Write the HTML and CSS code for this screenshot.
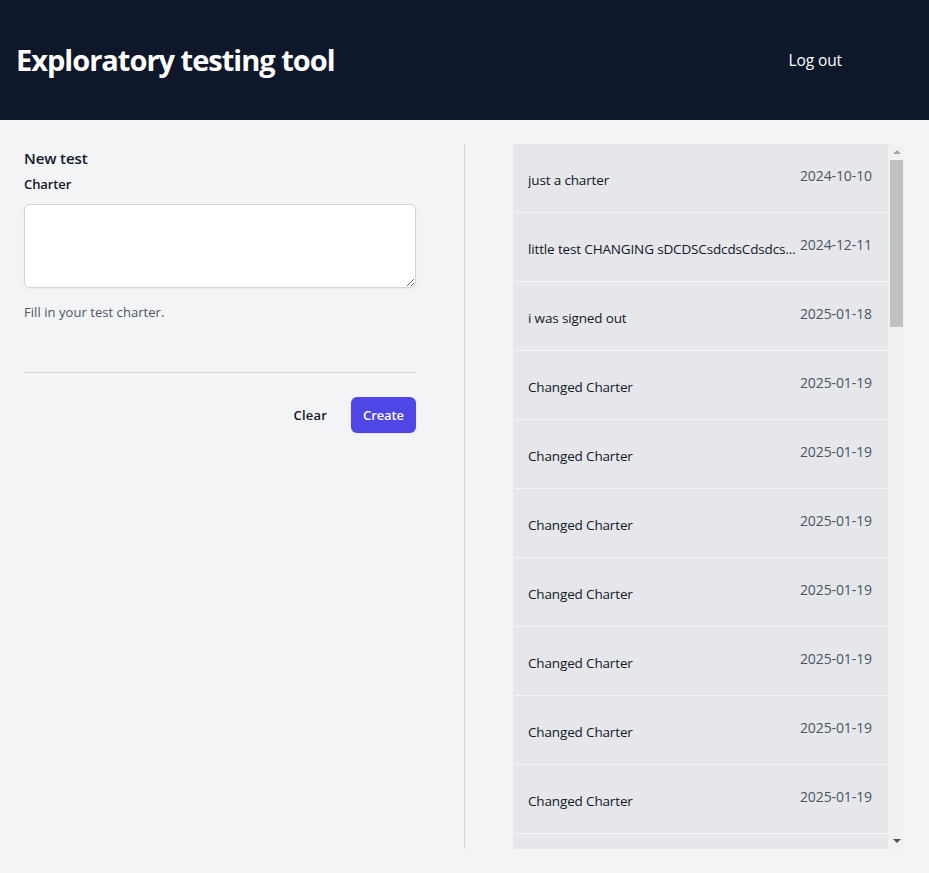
FILE: index.html
```html
<!DOCTYPE html>
<html lang="en">
<head>
<meta charset="utf-8">
<title>Exploratory testing tool</title>
<link rel="stylesheet" href="styles.css">
</head>
<body>
<header class="topbar">
  <h1 class="title">Exploratory testing tool</h1>
  <a class="logout" href="#">Log out</a>
</header>
<main class="main">
  <section class="col col-left">
    <form class="form">
      <div class="form-section">
        <h2 class="form-heading">New test</h2>
        <label class="label" for="charter">Charter</label>
        <textarea id="charter" class="textarea" rows="3"></textarea>
        <p class="hint">Fill in your test charter.</p>
      </div>
      <div class="actions">
        <button type="button" class="btn-clear">Clear</button>
        <button type="button" class="btn-create">Create</button>
      </div>
    </form>
  </section>
  <section class="col col-right">
    <div class="list-wrap">
      <ul class="list">
        <li class="item"><span class="item-title">just a charter</span><span class="item-date">2024-10-10</span></li>
        <li class="item"><span class="item-title">little test CHANGING sDCDSCsdcdsCdsdcsdcSDCsdcsdc</span><span class="item-date">2024-12-11</span></li>
        <li class="item"><span class="item-title">i was signed out</span><span class="item-date">2025-01-18</span></li>
        <li class="item"><span class="item-title">Changed Charter</span><span class="item-date">2025-01-19</span></li>
        <li class="item"><span class="item-title">Changed Charter</span><span class="item-date">2025-01-19</span></li>
        <li class="item"><span class="item-title">Changed Charter</span><span class="item-date">2025-01-19</span></li>
        <li class="item"><span class="item-title">Changed Charter</span><span class="item-date">2025-01-19</span></li>
        <li class="item"><span class="item-title">Changed Charter</span><span class="item-date">2025-01-19</span></li>
        <li class="item"><span class="item-title">Changed Charter</span><span class="item-date">2025-01-19</span></li>
        <li class="item"><span class="item-title">Changed Charter</span><span class="item-date">2025-01-19</span></li>
        <li class="item"><span class="item-title">Changed Charter</span><span class="item-date">2025-01-19</span></li>
      </ul>
      <div class="scrollbar" aria-hidden="true">
        <div class="sb-btn"><span class="sb-arrow-up"></span></div>
        <div class="sb-track"><div class="sb-thumb"></div></div>
        <div class="sb-btn"><span class="sb-arrow-down"></span></div>
      </div>
    </div>
  </section>
</main>
</body>
</html>
```

FILE: styles.css
```css
* { box-sizing: border-box; }
html, body { margin: 0; padding: 0; }
body {
  font-family: "Open Sans", "Noto Sans", "Liberation Sans", sans-serif;
  background: #f3f4f6;
  color: #111827;
  height: 873px;
  overflow: hidden;
}

.topbar {
  height: 120px;
  background: #0f172a;
  display: flex;
  align-items: center;
  justify-content: space-between;
  padding: 0 87px 0 16px;
}
.title {
  margin: 0;
  color: #fff;
  font-size: 29px;
  font-weight: 700;
  letter-spacing: -1px;
  line-height: 36px;
}
.logout {
  color: #fff;
  text-decoration: none;
  font-size: 15.5px;
  letter-spacing: -0.1px;
  line-height: 24px;
}

.main {
  display: grid;
  grid-template-columns: 440px 440px;
  padding: 24px;
  height: 753px;
}
.col { min-width: 0; }
.col-left { padding-right: 48px; }
.col-right {
  padding-left: 48px;
  border-left: 1px solid #d1d5db;
  min-height: 0;
}

.form-section {
  padding-bottom: 48px;
  border-bottom: 1px solid #d1d5db;
}
.form-heading {
  margin: 0;
  font-size: 15px;
  font-weight: 600;
  line-height: 28px;
  color: #111827;
  letter-spacing: -0.1px;
}
.label {
  display: block;
  font-size: 13px;
  font-weight: 600;
  line-height: 24px;
  color: #111827;
  letter-spacing: -0.1px;
}
.textarea {
  display: block;
  width: 100%;
  height: 84px;
  margin-top: 8px;
  border: 1px solid #d1d5db;
  border-radius: 6px;
  background: #fff;
  box-shadow: 0 1px 2px rgba(0,0,0,0.05);
  padding: 6px 12px;
  font: inherit;
  font-size: 14px;
  resize: vertical;
}
.hint {
  margin: 12px 0 0;
  font-size: 13px;
  line-height: 24px;
  color: #4b5563;
  letter-spacing: 0.05px;
}

.actions {
  margin-top: 24px;
  display: flex;
  justify-content: flex-end;
  align-items: center;
  gap: 24px;
}
.btn-clear {
  border: 0;
  background: none;
  padding: 0;
  font: inherit;
  font-size: 13px;
  font-weight: 600;
  line-height: 20px;
  color: #111827;
  letter-spacing: 0.2px;
}
.btn-create {
  border: 0;
  background: #4f46e5;
  color: #fff;
  font: inherit;
  font-size: 13px;
  font-weight: 600;
  line-height: 20px;
  padding: 8px 12px;
  border-radius: 6px;
  box-shadow: 0 1px 2px rgba(0,0,0,0.05);
  letter-spacing: -0.1px;
}

.list-wrap {
  display: flex;
  height: 705px;
}
.list {
  flex: 1;
  min-width: 0;
  list-style: none;
  margin: 0;
  padding: 0;
  overflow: hidden;
  display: flex;
  flex-direction: column;
  gap: 1px;
}

.scrollbar {
  flex: none;
  width: 16px;
  background: #f1f1f1;
  display: flex;
  flex-direction: column;
}
.sb-btn {
  flex: none;
  height: 16px;
  display: flex;
  align-items: center;
  justify-content: center;
}
.sb-arrow-up {
  width: 0;
  height: 0;
  border-left: 4px solid transparent;
  border-right: 4px solid transparent;
  border-bottom: 4px solid #a3a3a3;
  margin-left: 1px;
}
.sb-arrow-down {
  width: 0;
  height: 0;
  border-left: 4px solid transparent;
  border-right: 4px solid transparent;
  border-top: 4px solid #505050;
  margin-left: 1px;
}
.sb-track {
  flex: 1;
  padding: 0 1px 0 2px;
}
.sb-thumb {
  height: 167px;
  background: #c1c1c1;
}

.item {
  flex: none;
  height: 68px;
  background: #e5e7eb;
  display: flex;
  align-items: flex-start;
  gap: 4px;
  padding: 22px 16px 0 15px;
}
.item-title {
  flex: 1;
  min-width: 0;
  white-space: nowrap;
  overflow: hidden;
  text-overflow: ellipsis;
  font-size: 13.5px;
  line-height: 20px;
  margin-top: 4px;
  color: #111827;
  letter-spacing: -0.15px;
}
.item-date {
  flex: none;
  font-size: 14px;
  line-height: 20px;
  color: #4b5563;
  letter-spacing: -0.1px;
}
```
